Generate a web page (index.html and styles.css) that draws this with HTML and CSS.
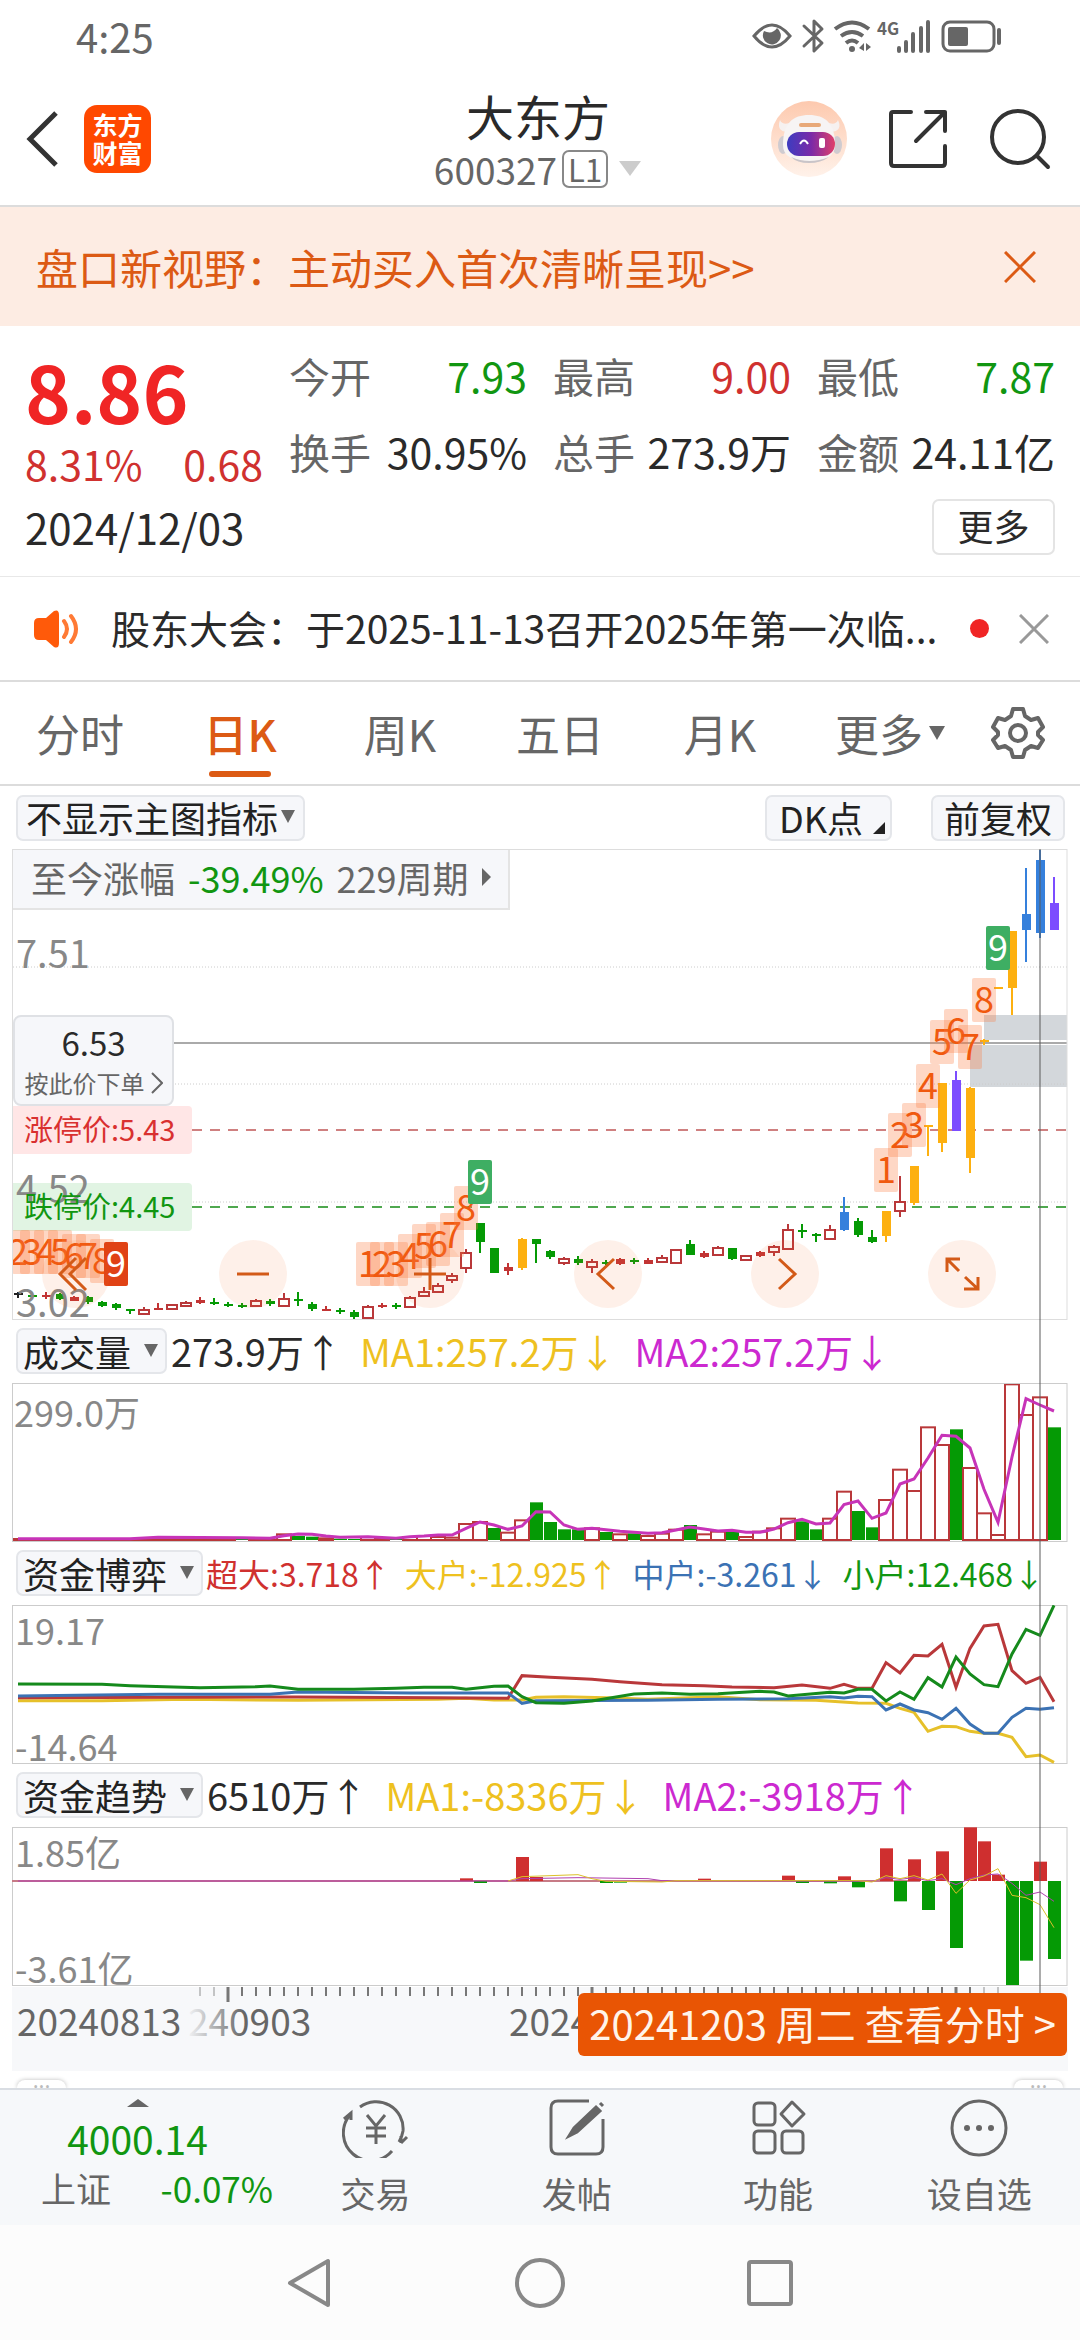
FILE: index.html
```html
<!DOCTYPE html>
<html lang="zh-CN">
<head>
<meta charset="utf-8">
<meta name="viewport" content="width=device-width">
<title>大东方 600327</title>
<link rel="stylesheet" href="styles.css">
</head>
<body>
<div class="status">
  <span class="status-time">4:25</span>
  <svg class="status-icons" viewBox="752 14 252 44" width="252" height="44" fill="none" stroke="#666" stroke-width="3">
    <path d="M754 36Q772 14 790 36Q772 58 754 36Z"/>
    <path d="M764 31A9 9 0 1 0 777 28Q772 35 764 31Z" fill="#666" stroke="none"/>
    <path d="M804 26L822 43L814 51V21L822 29L804 46" stroke-linejoin="round" stroke-linecap="round"/>
    <path d="M835 29Q852 16 869 29M841 36Q852 28 863 36M846 43Q852 38 858 43" stroke-width="4"/>
    <circle cx="852" cy="49" r="3" fill="#666" stroke="none"/>
    <path d="M859 48L864 43V51ZM866 43L871 47L866 51Z" fill="#666" stroke="none"/>
    <path d="M899 51V48M906 51V42M913 51V34M921 51V28M928 51V22" stroke-width="4" stroke-linecap="round"/>
    <rect x="943" y="22" width="51" height="29" rx="7"/>
    <rect x="948" y="27" width="20" height="19" rx="2" fill="#666" stroke="none"/>
    <path d="M999 30V43" stroke-width="4" stroke-linecap="round"/>
    <text x="877" y="35" class="net-label">4G</text>
  </svg>
</div>

<header class="header">
  <div class="header-left">
    <button class="icon-btn" aria-label="返回"><svg width="34" height="58" viewBox="0 0 34 58" fill="none" stroke="#333" stroke-width="5"><path d="M31 3L5 29L31 55"/></svg></button>
    <div class="logo"><span>东方</span><span>财富</span></div>
  </div>
  <div class="header-title">
    <h1>大东方</h1>
    <div class="code"><span>600327</span><span class="level">L1</span><svg width="24" height="15"><path d="M1 0H23L12 15Z" fill="#ccc"/></svg></div>
  </div>
  <div class="header-right">
    <button class="icon-btn" aria-label="助手">
      <svg width="76" height="76" viewBox="0 0 76 76">
        <defs>
          <linearGradient id="halo" x1="0" y1="0" x2="0" y2="1"><stop offset="0" stop-color="#fdc9ae"/><stop offset="1" stop-color="#fff2ea"/></linearGradient>
          <linearGradient id="visor"><stop offset="0" stop-color="#3d3cc0"/><stop offset=".5" stop-color="#7a2aa8"/><stop offset="1" stop-color="#e0406a"/></linearGradient>
        </defs>
        <circle cx="38" cy="38" r="38" fill="url(#halo)"/>
        <ellipse cx="12" cy="44" rx="5" ry="9" fill="#cfcbd0"/><ellipse cx="66" cy="44" rx="5" ry="9" fill="#cfcbd0"/>
        <path d="M9 19Q5 30 16 31L24 20Q12 26 9 19ZM67 19Q72 30 60 31L53 20Q64 26 67 19Z" fill="#f6f1f0"/>
        <path d="M12 44C12 22 22 14 38 14S64 22 64 44Q64 60 38 60T12 44Z" fill="#f7f4f4"/>
        <path d="M20 56Q38 64 58 56Q50 62 38 62T20 56Z" fill="#c9c4c8"/>
        <rect x="16" y="31" width="48" height="24" rx="12" fill="url(#visor)"/>
        <path d="M29 43Q33 36 37 43" fill="none" stroke="#fff" stroke-width="2"/>
        <rect x="48" y="37" width="6" height="10" rx="2" fill="#fff"/>
        <path d="M30 24H48" stroke="#e8a878" stroke-width="4" stroke-linecap="round"/>
      </svg>
    </button>
    <button class="icon-btn" aria-label="分享"><svg width="60" height="60" viewBox="0 0 60 60" fill="none" stroke="#333" stroke-width="4" stroke-linecap="round" stroke-linejoin="round"><path d="M23 3H5Q3 3 3 5V54Q3 57 6 57H54Q57 57 57 54V37M38 3H57V22M57 3L28 32"/></svg></button>
    <button class="icon-btn" aria-label="搜索"><svg width="62" height="62" viewBox="0 0 62 62" fill="none" stroke="#333" stroke-width="4" stroke-linecap="round"><circle cx="29" cy="29" r="26"/><path d="M48 48L59 59"/></svg></button>
  </div>
</header>

<div class="banner">
  <a class="banner-link" href="#">盘口新视野：主动买入首次清晰呈现&gt;&gt;</a>
  <button class="icon-btn" aria-label="关闭"><svg width="32" height="32" viewBox="0 0 32 32" stroke="#dc5a14" stroke-width="3"><path d="M1 1L31 31M31 1L1 31"/></svg></button>
</div>

<section class="quote">
  <div class="quote-main">
    <strong class="price">8.86</strong>
    <div class="change"><span>8.31%</span><span>0.68</span></div>
  </div>
  <dl class="stats">
    <div><dt>今开</dt><dd class="down">7.93</dd></div>
    <div><dt>最高</dt><dd class="up">9.00</dd></div>
    <div><dt>最低</dt><dd class="down">7.87</dd></div>
    <div><dt>换手</dt><dd>30.95%</dd></div>
    <div><dt>总手</dt><dd>273.9万</dd></div>
    <div><dt>金额</dt><dd>24.11亿</dd></div>
  </dl>
  <time class="date">2024/12/03</time>
  <button class="more-btn">更多</button>
</section>

<div class="notice">
  <svg width="46" height="38" viewBox="0 0 46 38"><path d="M0 13Q0 8 5 8H12L20 1Q25 -1 25 5V33Q25 39 20 37L12 30H5Q0 30 0 25Z" fill="#ff5a0a"/><path d="M30 11Q36 19 30 27M37 6Q47 19 37 32" fill="none" stroke="#ff7a35" stroke-width="4" stroke-linecap="round"/></svg>
  <p>股东大会：于2025-11-13召开2025年第一次临...</p>
  <i class="dot"></i>
  <button class="icon-btn" aria-label="关闭公告"><svg width="30" height="30" viewBox="0 0 30 30" stroke="#999" stroke-width="3"><path d="M1 1L29 29M29 1L1 29"/></svg></button>
</div>

<nav class="tabs">
  <a href="#">分时</a>
  <a href="#" class="active">日K</a>
  <a href="#">周K</a>
  <a href="#">五日</a>
  <a href="#">月K</a>
  <a href="#">更多<svg width="16" height="14"><path d="M0 0H16L8 14Z" fill="#666"/></svg></a>
  <button class="icon-btn" aria-label="设置"><svg width="54" height="54" viewBox="0 0 54 54" fill="none" stroke="#666" stroke-width="4" stroke-linejoin="round"><path d="M22 3H32L34 10L40 14L47 12L52 21L47 26V29L52 34L47 42L40 40L34 44L32 51H22L20 44L14 40L7 42L2 34L7 29V26L2 21L7 12L14 14L20 10Z"/><circle cx="27" cy="27" r="8"/></svg></button>
</nav>

<div class="toolbar">
  <button class="chip">不显示主图指标<svg width="14" height="13"><path d="M0 0H14L7 13Z" fill="#666"/></svg></button>
  <button class="chip chip-dk">DK点<svg class="corner" width="12" height="12"><path d="M12 0V12H0Z" fill="#222"/></svg></button>
  <button class="chip chip-fq">前复权</button>
</div>

<main class="charts">
  <div class="panel">
    <svg id="kline" viewBox="12 9 1056 471" role="img" aria-label="日K线"></svg>
    <button class="range">至今涨幅 <b class="down">-39.49%</b> 229周期<svg width="9" height="18"><path d="M0 0V18L9 9Z" fill="#666"/></svg></button>
    <button class="order"><strong>6.53</strong><span>按此价下单<svg width="12" height="22" viewBox="0 0 12 22" fill="none" stroke="#666" stroke-width="2"><path d="M1 1L11 11L1 21"/></svg></span></button>
    <div class="controls">
      <button aria-label="最早"><svg viewBox="0 0 68 68"><path d="M34 18L18 34L34 50M44 18L28 34L44 50"/></svg></button>
      <button aria-label="缩小"><svg viewBox="0 0 68 68"><path d="M18 34H50"/></svg></button>
      <button aria-label="放大"><svg viewBox="0 0 68 68"><path d="M18 34H50M34 18V50"/></svg></button>
      <button aria-label="左移"><svg viewBox="0 0 68 68"><path d="M40 19L24 34L40 49"/></svg></button>
      <button aria-label="右移"><svg viewBox="0 0 68 68"><path d="M28 19L44 34L28 49"/></svg></button>
      <button aria-label="全屏"><svg viewBox="0 0 68 68"><path d="M19 32V19H32M19 19L31 31M50 37V49H36M50 49L37 37"/></svg></button>
    </div>
  </div>

  <div class="legend">
    <button class="chip">成交量<svg width="14" height="13"><path d="M0 0H14L7 13Z" fill="#666"/></svg></button>
    <span>273.9万↑</span><span class="yellow">MA1:257.2万↓</span><span class="magenta">MA2:257.2万↓</span>
  </div>
  <svg id="volume" viewBox="12 63 1056 159" role="img" aria-label="成交量"></svg>

  <div class="legend legend-small">
    <button class="chip">资金博弈<svg width="14" height="13"><path d="M0 0H14L7 13Z" fill="#666"/></svg></button>
    <span class="red">超大:3.718↑</span><span class="yellow">大户:-12.925↑</span><span class="blue">中户:-3.261↓</span><span class="green">小户:12.468↓</span>
  </div>
  <svg id="funds" viewBox="12 285 1056 159" role="img" aria-label="资金博弈"></svg>

  <div class="legend">
    <button class="chip">资金趋势<svg width="14" height="13"><path d="M0 0H14L7 13Z" fill="#666"/></svg></button>
    <span>6510万↑</span><span class="yellow">MA1:-8336万↓</span><span class="magenta">MA2:-3918万↑</span>
  </div>
  <svg id="trend" viewBox="12 27 1056 159" role="img" aria-label="资金趋势"></svg>

  <div class="axis">
    <svg id="dates" viewBox="12 187 1056 86" role="img" aria-label="日期"></svg>
    <button class="day-flag">20241203 周二 查看分时 &gt;</button>
  </div>
  <i class="cursor"></i>
</main>

<div class="drawer"><span>···</span><span>···</span></div>

<footer class="bottom">
  <a class="index" href="#">
    <svg width="22" height="8"><path d="M0 8L11 0L22 8Z" fill="#666"/></svg>
    <strong class="down">4000.14</strong>
    <span class="index-row"><span>上证</span><span class="down">-0.07%</span></span>
  </a>
  <a href="#"><svg class="bottom-icon" viewBox="0 0 68 60" fill="none" stroke="#666" stroke-width="3"><path d="M18 9A27 27 0 0 1 61 33Q60 39 57 44M50 53A27 27 0 0 1 8 17M2 21L9 15V22M59 45L65 39M59 45V38M25 17L34 28L43 17M34 28V46M24 30H44M24 38H44"/></svg><span>交易</span></a>
  <a href="#"><svg class="bottom-icon" viewBox="0 0 68 60" fill="none" stroke="#666" stroke-width="3"><path d="M46 3H15Q8 3 8 10V49Q8 56 15 56H53Q60 56 60 49V21"/><path d="M53 9L57 13L34 34L26 38L31 30ZM57 5L60 8" fill="#666"/></svg><span>发帖</span></a>
  <a href="#"><svg class="bottom-icon" viewBox="0 0 68 60" fill="none" stroke="#666" stroke-width="3"><rect x="10" y="5" width="21" height="22" rx="4"/><rect x="10" y="33" width="21" height="22" rx="4"/><rect x="38" y="33" width="21" height="22" rx="4"/><path d="M48 4L60 16L48 28L37 16Z" stroke-linejoin="round"/></svg><span>功能</span></a>
  <a href="#"><svg class="bottom-icon" viewBox="0 0 68 60" fill="none" stroke="#666" stroke-width="3"><circle cx="34" cy="30" r="27"/><g fill="#666" stroke="none"><circle cx="22" cy="30" r="3"/><circle cx="34" cy="30" r="3"/><circle cx="46" cy="30" r="3"/></g></svg><span>设自选</span></a>
</footer>

<div class="sysnav">
  <button class="icon-btn" aria-label="系统返回"><svg width="50" height="50" viewBox="0 0 50 50" fill="none" stroke="#888" stroke-width="4" stroke-linejoin="round"><path d="M43 3V47L5 25Z"/></svg></button>
  <button class="icon-btn" aria-label="主页"><svg width="50" height="50" viewBox="0 0 50 50" fill="none" stroke="#888" stroke-width="4"><circle cx="25" cy="25" r="23"/></svg></button>
  <button class="icon-btn" aria-label="最近任务"><svg width="50" height="50" viewBox="0 0 50 50" fill="none" stroke="#888" stroke-width="4"><rect x="4" y="4" width="42" height="42" rx="2"/></svg></button>
</div>
<script src="chart.js"></script>
</body>
</html>
```
FILE: styles.css
```css
* { box-sizing: border-box; }

body {
  margin: 0;
  background: #fff;
  color: #2a2a2a;
  font-family: "Noto Sans CJK SC", "Noto Sans", sans-serif;
  line-height: 1;
}

button {
  margin: 0;
  padding: 0;
  border: 0;
  background: none;
  color: inherit;
  font: inherit;
  white-space: nowrap;
}

a { color: inherit; text-decoration: none; }
svg { display: block; flex: none; }
.icon-btn { display: flex; }

.up, .red { color: #d0312f; }
.down, .green { color: #119611; }
.yellow { color: #eec11f; }
.magenta { color: #cc29d0; }
.blue { color: #3b72b4; }

/* status bar */
.status {
  display: flex;
  align-items: center;
  justify-content: space-between;
  height: 72px;
  padding: 0 76px;
  color: #666;
}
.status-time { font-size: 40px; }
.net-label { font-size: 17px; font-weight: 700; fill: #666; stroke: none; }

/* header */
.header {
  display: grid;
  grid-template-columns: 1fr auto 1fr;
  align-items: center;
  height: 135px;
  padding: 0 29px 0 25px;
  border-bottom: 2px solid #dcdcdc;
}
.header-left { display: flex; align-items: center; gap: 25px; }
.logo {
  display: flex;
  flex-direction: column;
  align-items: center;
  justify-content: center;
  gap: 3px;
  width: 67px;
  height: 68px;
  border-radius: 13px;
  background: #ff4800;
  color: #fff;
  font-size: 25px;
  font-weight: 700;
}
.header-title { display: flex; flex-direction: column; align-items: center; gap: 6px; padding-bottom: 2px; }
.header-title h1 { margin: 0; font-size: 48px; font-weight: 400; line-height: 56px; }
.code { display: flex; align-items: center; gap: 5px; color: #666; font-size: 37px; line-height: 40px; }
.code svg { margin-left: 5px; }
.level {
  padding: 0 4px;
  border: 2px solid #888;
  border-radius: 7px;
  font-size: 31px;
  line-height: 34px;
}
.header-right { display: flex; align-items: center; justify-content: flex-end; gap: 41px; }

/* promotion banner */
.banner {
  display: flex;
  align-items: center;
  justify-content: space-between;
  height: 119px;
  padding: 0 44px 0 36px;
  background: #fdece3;
  color: #dc5a14;
}
.banner-link { font-size: 42px; }

/* quote */
.quote {
  display: grid;
  grid-template-columns: 238fr 766fr;
  column-gap: 26px;
  padding: 24px 25px 21px;
  border-bottom: 1px solid #e8e8e8;
}
.quote-main { display: flex; flex-direction: column; padding-bottom: 3px; }
.price { color: #f02525; font-size: 78px; line-height: 80px; }
.change {
  display: flex;
  justify-content: space-between;
  color: #d0312f;
  font-size: 41px;
  line-height: 66px;
}
.stats {
  display: grid;
  grid-template-columns: repeat(3, 1fr);
  align-content: start;
  gap: 26px;
  margin: 0;
  font-size: 41px;
  line-height: 50px;
}
.stats div { display: flex; justify-content: space-between; white-space: nowrap; }
.stats dt { color: #666; }
.stats dd { margin: 0; }
.date { align-self: center; font-size: 42px; line-height: 56px; }
.more-btn {
  justify-self: end;
  width: 123px;
  height: 56px;
  padding-bottom: 4px;
  border: 2px solid #e4e4e4;
  border-radius: 7px;
  font-size: 36px;
}

/* notice */
.notice {
  display: flex;
  align-items: center;
  height: 105px;
  padding: 0 31px 0 34px;
  border-bottom: 2px solid #dcdcdc;
}
.notice p { flex: 1; margin: 0 0 4px 31px; font-size: 39px; line-height: 56px; white-space: nowrap; }
.dot { width: 19px; height: 19px; margin-right: 30px; border-radius: 50%; background: #f02525; }

/* period tabs */
.tabs {
  display: grid;
  grid-template-columns: repeat(5, 160fr) 180fr 76fr;
  justify-items: center;
  align-items: center;
  height: 104px;
  padding-right: 24px;
  border-bottom: 2px solid #dcdcdc;
  color: #666;
  font-size: 44px;
}
.tabs a { display: flex; position: relative; align-items: center; gap: 6px; line-height: 102px; }
.tabs .active { color: #dc5a14; font-weight: 500; }
.tabs .active::after {
  content: "";
  position: absolute;
  right: 6px;
  bottom: 7px;
  left: 6px;
  height: 6px;
  border-radius: 3px;
  background: #dc5a14;
}

/* chips */
.chip {
  display: flex;
  position: relative;
  align-items: center;
  height: 46px;
  padding: 0 8px 2px;
  border: 2px solid #e4e6ea;
  border-radius: 7px;
  background: #f6f7fa;
  color: #222;
  font-size: 36px;
}
.toolbar { display: flex; align-items: center; height: 63px; padding: 0 15px 0 16px; }
.toolbar .chip { gap: 3px; }
.chip-dk { width: 127px; margin-left: auto; }
.toolbar .chip-dk { padding-left: 12px; }
.chip-fq { margin-left: 39px; }
.toolbar .chip-fq { padding: 0 11px 2px; }
.corner { position: absolute; right: 5px; bottom: 5px; }

/* charts */
.charts { position: relative; margin: 0 12px; }
.charts > svg, .panel > svg, .axis > svg { width: 100%; height: auto; }
.panel, .axis { position: relative; }
.range {
  display: flex;
  position: absolute;
  top: 1px;
  left: 1px;
  align-items: center;
  gap: 13px;
  height: 60px;
  padding: 0 17px 4px 18px;
  border-right: 2px solid #e4e4e4;
  border-bottom: 2px solid #e4e4e4;
  background: #f6f7fa;
  color: #666;
  font-size: 36px;
}
.range b { font-weight: 400; }
.order {
  display: flex;
  position: absolute;
  top: 166px;
  left: 1px;
  flex-direction: column;
  align-items: center;
  justify-content: center;
  gap: 8px;
  width: 161px;
  height: 91px;
  border: 2px solid #dfe1e5;
  border-radius: 8px;
  background: #f6f7fa;
}
.order strong { font-size: 33px; font-weight: 400; line-height: 36px; }
.order span { display: flex; align-items: center; gap: 6px; color: #666; font-size: 24px; line-height: 30px; }
.controls {
  display: flex;
  position: absolute;
  right: 72px;
  bottom: 12px;
  left: 30px;
  justify-content: space-between;
}
.controls button { width: 68px; height: 68px; border-radius: 50%; background: rgba(250, 110, 40, 0.1); }
.controls path { fill: none; stroke: #d35a18; stroke-width: 3px; }
.legend {
  display: flex;
  align-items: center;
  gap: 18px;
  height: 63px;
  padding-bottom: 2px;
  padding-left: 4px;
  font-size: 38px;
  white-space: nowrap;
}
.legend .chip { gap: 13px; padding: 0 7px 0 5px; }
.legend .chip + span { margin-left: -14px; }
.legend-small { gap: 14px; font-size: 32px; }
.legend-small .chip + span { margin-left: -11px; }
.cursor {
  position: absolute;
  top: 0;
  bottom: 72px;
  left: 97.3%;
  width: 2px;
  background: rgba(90, 90, 90, 0.5);
}
.day-flag {
  position: absolute;
  z-index: 1;
  top: 7px;
  right: 1px;
  height: 63px;
  padding: 0 11px 3px;
  border-radius: 6px;
  background: #e95504;
  color: #fff4ea;
  font-size: 40px;
}

.axis-text { font-size: 36px; fill: #888; }
.price-text { font-size: 38px; fill: #888; }
.date-text { font-size: 37px; fill: #666; }
.limit-text { font-size: 29px; }
.pin-text { font-size: 36px; text-anchor: middle; }

/* peeking drawer handles */
.drawer {
  display: flex;
  align-items: flex-end;
  justify-content: space-between;
  height: 16px;
  padding: 0 17px;
  overflow: hidden;
}
.drawer span {
  width: 49px;
  height: 8px;
  border-radius: 8px 8px 0 0;
  box-shadow: 0 0 4px #bbb;
  color: #bbb;
  font-family: "Noto Sans", sans-serif;
  font-size: 22px;
  line-height: 10px;
  text-align: center;
}

/* bottom bar */
.bottom {
  display: grid;
  grid-template-columns: 275px repeat(4, 1fr);
  height: 137px;
  border-top: 2px solid #d9dde3;
  background: #f6f8fa;
  color: #666;
  font-size: 35px;
}
.bottom a { display: flex; flex-direction: column; align-items: center; gap: 15px; padding-top: 8px; line-height: 40px; }
.bottom-icon { width: 68px; height: 60px; }
.bottom .index { gap: 8px; padding-top: 9px; }
.index strong { padding-top: 3px; font-size: 39px; font-weight: 400; }
.index-row { display: flex; align-self: stretch; justify-content: space-between; padding: 2px 2px 0 41px; }

/* system navigation */
.sysnav {
  display: flex;
  align-items: center;
  justify-content: center;
  gap: 180px;
  height: 115px;
  background: #fcfcfc;
}
```
FILE: chart.js
```js
const x = i => 18 + 14 * i;
const COLORS = { g: '#059a05', r: '#b9383a', R: '#c23434', y: '#fdb010', b: '#3580dc', p: '#7c4dff', k: '#222' };
const rect = (l, t, w, h, a) => `<rect x="${l}" y="${t}" width="${w}" height="${h}" ${a}/>`;
const line = (x1, y1, x2, y2, a) => `<line x1="${x1}" y1="${y1}" x2="${x2}" y2="${y2}" ${a}/>`;
const text = (l, y, cls, s, a = '') => `<text x="${l}" y="${y}" class="${cls}" ${a}>${s}</text>`;
const curve = (pts, color, w) =>
  `<polyline fill="none" stroke="${color}" stroke-width="${w}" points="${pts.map(([i, v]) => x(i) + ',' + v / 3).join(' ')}"/>`;
const frame = (t, c = '#ccc') => rect(12.5, t + 0.5, 1054.5, 158, `fill="none" stroke="${c}"`);

// kind, high, body top, body bottom, low
const candles = `k 452 453 455 458|g 454 455 456 458|R 452 455 457 459|g 453 454 459 460|R 456 457 461 461|g 456 457 462 464|g 461 462 466 467|g 463 464 468 470|g 469 469 471 474|r 467 469 474 475|R 463 468 470 470|r 464 464 469 469|r 461 462 466 467|R 457 460 463 464|g 458 462 464 465|g 462 464 465 467|g 463 465 467 468|r 459 460 466 466|g 459 461 464 466|r 453 458 466 467|g 452 459 461 466|g 462 464 469 471|R 466 469 471 471|g 468 470 472 474|g 470 472 477 480|r 465 466 478 478|R 463 465 467 468|g 463 465 467 469|r 456 457 467 467|r 447 451 456 457|r 443 445 452 453|r 433 435 440 443|r 409 412 428 433|g 383 383 402 413|g 408 408 433 433|R 423 427 431 435|y 398 399 428 430|g 399 399 404 423|g 410 411 417 419|r 417 418 423 425|g 416 419 423 425|r 419 421 427 433|g 420 422 423 425|R 418 419 424 425|g 418 420 422 424|R 418 420 424 424|r 415 417 422 422|r 409 409 423 423|g 400 404 415 415|R 411 413 417 418|r 406 407 415 416|g 408 408 419 420|r 415 415 420 421|R 411 412 416 417|r 405 406 412 416|r 384 389 409 410|g 384 390 392 398|g 393 394 396 402|r 385 389 399 399|b 357 372 390 391|g 378 381 395 397|g 390 397 402 403|y 371 371 396 402|r 336 361 371 377|y 326 326 363 365|y 285 285 287 316|y 243 243 303 312|p 231 240 291 291|y 247 248 318 333|y 199 200 202 205|y 147 147 149 149|y 91 91 148 175|b 28 74 90 122|b 9 20 93 98|p 37 63 90 90`
  .split('|').map(s => s.split(' ').map((v, n) => n ? +v : v));

const pins = [[0, 2, 390], [1, 3, 390], [2, 4, 390], [3, 5, 390], [4, 6, 394], [5, 7, 394], [6, 8, 399], [7, 9, 402, '#e04215'],
  [25, 1, 402], [26, 2, 402], [27, 3, 402], [28, 4, 394], [29, 5, 384], [30, 6, 382], [31, 7, 373], [32, 8, 346], [33, 9, 320, '#3eae63'],
  [62, 1, 308], [63, 2, 273], [64, 3, 263], [65, 4, 224], [66, 5, 180], [67, 6, 169], [68, 7, 185], [69, 8, 138], [70, 9, 86, '#3eae63']];

let k = rect(984, 175, 83, 25, 'fill="#d3d7db"') + rect(970, 205, 97, 42, 'fill="#d3d7db"');
[127, 244, 362].forEach(y => k += line(13, y, 1067, y, 'stroke="#ccc" stroke-dasharray="1 2"'));
k += '<path d="M12 266H188Q192 266 192 270V310Q192 314 188 314H12Z" fill="#ffe6e6"/><path d="M12 343H188Q192 343 192 347V387Q192 391 188 391H12Z" fill="#e1f4e3"/>';
k += text(16, 128, 'price-text', '7.51') + text(16, 363, 'price-text', '4.52');
k += line(173, 203, 1067, 203, 'stroke="#aaa" stroke-width="2"');
k += line(192, 290, 1067, 290, 'stroke="#cf8080" stroke-width="2" stroke-dasharray="10 8"');
k += line(192, 367, 1067, 367, 'stroke="#4fa84f" stroke-width="2" stroke-dasharray="10 8"');
candles.forEach(([c, hi, t, b, lo], i) => {
  const col = COLORS[c], cx = x(i);
  k += line(cx, hi, cx, c === 'r' ? t : lo, `stroke="${col}" stroke-width="2"`);
  if (c === 'r') k += line(cx, b, cx, lo, `stroke="${col}" stroke-width="2"`) + rect(cx - 5, t + 1, 10, Math.max(b - t - 1, 2), `fill="#fff" stroke="${col}" stroke-width="2"`);
  else k += rect(cx - 4, t, 9, Math.max(b - t, 2), `fill="${col}"`);
});
k += text(16, 477, 'price-text', '3.02');
k += text(24, 301, 'limit-text', '涨停价:5.43', 'fill="#d9302f"') + text(24, 378, 'limit-text', '跌停价:4.45', 'fill="#119611"');
pins.forEach(([i, n, t, bg]) => {
  const l = Math.max(x(i) - 12, 12);
  k += rect(l, t, x(i) + 12 - l, 44, bg ? `rx="2" fill="${bg}"` : 'rx="2" fill="#fb7a40" fill-opacity=".3"');
  k += text(x(i), t + 35, 'pin-text', n, `fill="${bg ? '#fff' : '#f0590f'}"`);
});
k += rect(12.5, 9.5, 1054.5, 470, 'fill="none" stroke="#ddd"');
document.getElementById('kline').innerHTML = k;

// volume bars, one per session from the 17th on; the earlier ones are flat
const volumes = 'g656 r652 r656 r640 g648 g650 r652 g656 g657 r648 r652 g656 r648 r645 r648 r650 r609 r603 g624 r635 r598 g547 g606 g628 g628 r622 g636 r640 g640 r645 r638 r626 g615 r640 r632 g634 r648 r632 r622 r593 g604 g628 r593 r512 g573 g622 r537 r446 r510 r319 r372 g328 r441 r577 r642 r190 r282 r229 g322'.split(' ');
let v = text(14, 107, 'axis-text', '299.0万');
for (let i = 0; i < 75; i++) {
  const s = i < 16 ? 'r654' : volumes[i - 16], top = +s.slice(1) / 3;
  v += s[0] === 'g' ? rect(x(i) - 6, top, 13, 220 - top, 'fill="#059a05"')
    : rect(x(i) - 7, top + 1, 14, Math.max(219 - top, 1), 'fill="#fff" stroke="#b9383a" stroke-width="2"');
}
v += frame(63);
v += curve([[0, 656], [8, 656], [10, 652], [16, 653], [18, 655], [19, 647], [20, 642], [21, 643], [22, 648], [23, 652], [25, 650], [27, 655], [28, 650], [29, 648], [30, 645], [31, 645], [32, 625], [33, 606], [34, 615], [35, 628], [36, 618], [37, 575], [38, 576], [39, 615], [40, 628], [41, 625], [43, 634], [45, 640], [46, 638], [47, 630], [48, 621], [49, 627], [50, 633], [51, 631], [52, 637], [53, 637], [54, 627], [55, 608], [56, 598], [57, 612], [58, 609], [59, 554], [60, 543], [61, 595], [62, 579], [63, 492], [64, 477], [65, 414], [66, 346], [67, 349], [68, 384], [69, 508], [70, 607], [71, 411], [72, 236], [73, 255], [74, 273]], '#c734b8', 3);
document.getElementById('volume').innerHTML = v;

let f = frame(285) + text(15, 325, 'axis-text', '19.17') + text(15, 441, 'axis-text', '-14.64');
f += curve([[0, 1142], [6, 1142], [12, 1138], [20, 1141], [30, 1138], [32, 1135], [34, 1140], [36, 1140], [37, 1132], [39, 1130], [42, 1133], [45, 1138], [50, 1130], [53, 1139], [57, 1141], [60, 1149], [62, 1150], [63, 1165], [64, 1177], [65, 1234], [66, 1219], [67, 1220], [68, 1234], [69, 1240], [70, 1240], [71, 1252], [72, 1310], [73, 1305], [74, 1327]], '#e6c02a', 3);
f += curve([[0, 1133], [20, 1131], [30, 1133], [35, 1135], [36, 1067], [38, 1072], [41, 1078], [43, 1085], [46, 1094], [49, 1097], [51, 1101], [54, 1103], [56, 1095], [58, 1105], [59, 1093], [60, 1105], [61, 1105], [62, 1028], [63, 1059], [64, 1006], [65, 1008], [66, 973], [67, 1102], [68, 985], [69, 918], [70, 913], [71, 1052], [72, 1090], [73, 1072], [74, 1145]], '#b9383a', 3);
f += curve([[0, 1128], [10, 1123], [18, 1123], [20, 1116], [28, 1119], [35, 1119], [36, 1150], [37, 1142], [45, 1141], [50, 1138], [55, 1136], [58, 1130], [59, 1134], [60, 1129], [61, 1130], [62, 1170], [63, 1152], [64, 1170], [65, 1178], [66, 1198], [67, 1165], [68, 1212], [69, 1240], [70, 1240], [71, 1192], [72, 1165], [73, 1168], [74, 1163]], '#3b72b4', 3);
f += curve([[0, 1092], [6, 1093], [8, 1097], [13, 1103], [17, 1100], [18, 1098], [20, 1108], [24, 1108], [27, 1105], [29, 1102], [31, 1102], [32, 1108], [34, 1099], [35, 1098], [36, 1130], [37, 1148], [39, 1150], [41, 1143], [44, 1122], [46, 1119], [48, 1123], [50, 1121], [53, 1114], [54, 1116], [55, 1128], [58, 1117], [59, 1119], [60, 1108], [61, 1108], [62, 1143], [63, 1116], [64, 1138], [65, 1073], [66, 1101], [67, 1011], [68, 1062], [69, 1094], [70, 1100], [71, 1002], [72, 928], [73, 946], [74, 856]], '#158a1c', 3);
document.getElementById('funds').innerHTML = f;

const flows = { 32: 235, 33: 249, 36: 171, 37: 231, 42: 249, 43: 248, 49: 236, 55: 227, 56: 249, 58: 250, 59: 229, 60: 262, 62: 145, 63: 304, 64: 178, 65: 330, 66: 154, 67: 444, 68: 82, 69: 124, 70: 224, 71: 555, 72: 482, 73: 185, 74: 477 };
let t = frame(27) + text(15, 67, 'axis-text', '1.85亿') + text(15, 183, 'axis-text', '-3.61亿');
t += line(12, 81, 920, 81, 'stroke="#c77b86" stroke-width="2"');
for (const i in flows) {
  const y = flows[i] / 3;
  t += y < 81 ? rect(x(+i) - 6, y, 13, 81 - y, 'fill="#cf2f2f"') : rect(x(+i) - 6, 81, 13, y - 81, 'fill="#059a05"');
}
t += curve([[0, 243], [35, 243], [36, 236], [40, 233], [45, 236], [46, 242], [61, 244], [62, 233], [63, 238], [64, 233], [65, 242], [66, 236], [67, 254], [68, 236], [69, 225], [70, 222], [71, 250], [72, 286], [73, 276], [74, 304]], '#b040b0', 1);
t += curve([[35, 243], [36, 230], [40, 224], [41, 236], [42, 244], [46, 246], [47, 242], [60, 242], [61, 246], [62, 227], [63, 236], [64, 227], [65, 240], [66, 222], [67, 280], [68, 240], [69, 228], [70, 206], [71, 286], [72, 293], [73, 314], [74, 383]], '#dcc02a', 1);
document.getElementById('trend').innerHTML = t;

let d = rect(12, 188, 1056, 84, 'fill="#f7f8fa"');
for (let i = 13; i <= 70; i++)
  d += line(x(i), 188, x(i), i === 15 ? 203 : 197, `stroke="#777" stroke-width="${[15, 41, 67].includes(i) ? 3 : 2}" opacity="${i < 15 || i > 68 ? 0.4 : 1}"`);
d += '<defs><linearGradient id="fade" gradientUnits="userSpaceOnUse" x1="186" x2="244" y1="0" y2="0"><stop offset="0" stop-color="#f7f8fa"/><stop offset="1" stop-color="#f7f8fa" stop-opacity="0"/></linearGradient></defs>';
d += text(188, 237, 'date-text', '240903') + rect(186, 206, 58, 40, 'fill="url(#fade)"') + text(17, 237, 'date-text', '20240813') + text(509, 237, 'date-text', '2024');
document.getElementById('dates').innerHTML = d;
```
